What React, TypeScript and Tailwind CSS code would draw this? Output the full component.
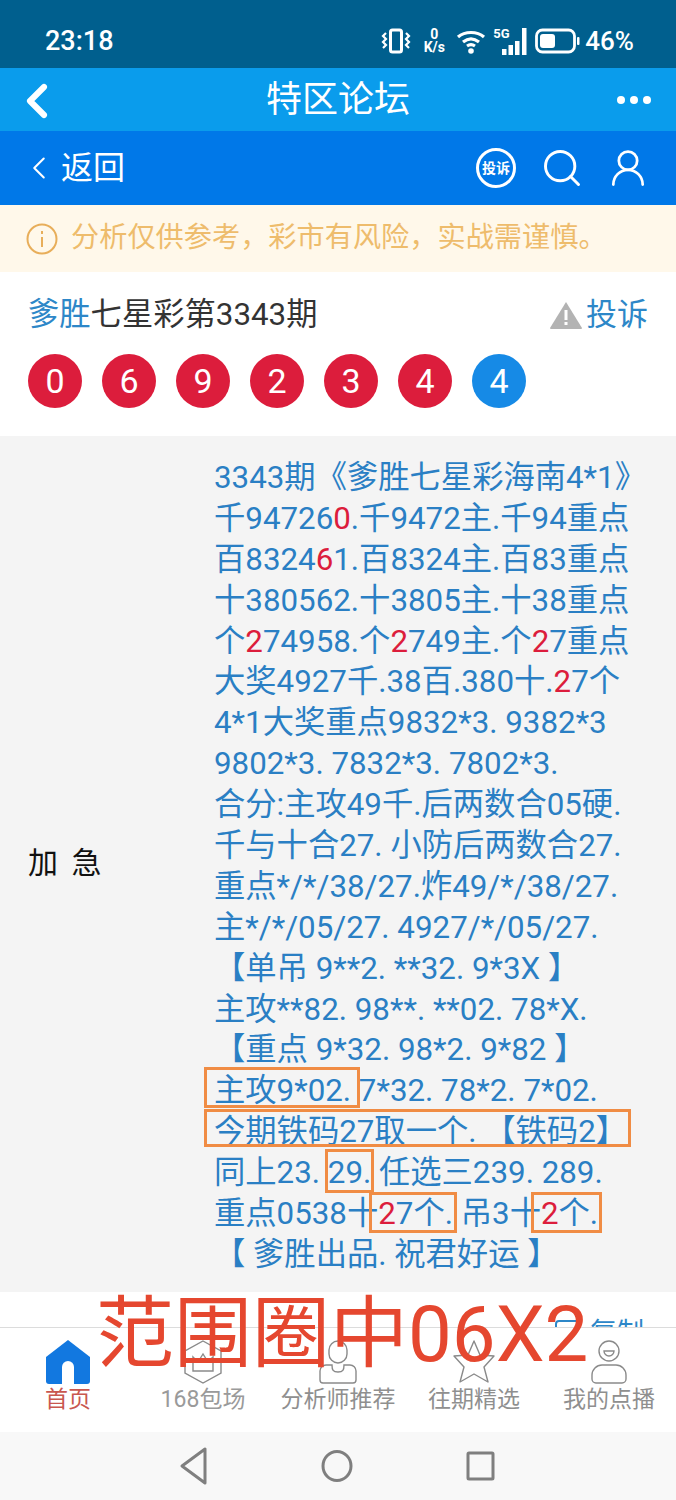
import React from 'react';
import { ChevronLeft, Search, UserRound } from 'lucide-react';

const font = "font-['Roboto','Noto_Sans_CJK_SC',sans-serif]";

type Part = string | { red: string };

const lines: Part[][] = [
  ['3343期《爹胜七星彩海南4*1》'],
  ['千94726', { red: '0' }, '.千9472主.千94重点'],
  ['百8324', { red: '6' }, '1.百8324主.百83重点'],
  ['十380562.十3805主.十38重点'],
  ['个', { red: '2' }, '74958.个', { red: '2' }, '749主.个', { red: '2' }, '7重点'],
  ['大奖4927千.38百.380十.', { red: '2' }, '7个'],
  ['4*1大奖重点9832*3. 9382*3'],
  ['9802*3. 7832*3. 7802*3.'],
  ['合分:主攻49千.后两数合05硬.'],
  ['千与十合27. 小防后两数合27.'],
  ['重点*/*/38/27.炸49/*/38/27.'],
  ['主*/*/05/27. 4927/*/05/27.'],
  ['【单吊 9**2. **32. 9*3X 】'],
  ['主攻**82. 98**. **02. 78*X.'],
  ['【重点 9*32. 98*2. 9*82 】'],
  ['主攻9*02. 7*32. 78*2. 7*02.'],
  ['今期铁码27取一个. 【铁码2】'],
  ['同上23. 29. 任选三239. 289.'],
  ['重点0538十', { red: '2' }, '7个. 吊3十', { red: '2' }, '个.'],
  ['【 爹胜出品. 祝君好运 】'],
];

const balls = ['0', '6', '9', '2', '3', '4'];

const StatusIcons = () => (
  <div className="flex items-center text-white">
    <svg width="30" height="28" viewBox="0 0 30 28" fill="none" stroke="currentColor" strokeWidth="3">
      <rect x="9.5" y="3" width="11" height="22" rx="2" />
      <path d="M5 6l-3 3 3 3-3 3 3 3-3 3M25 6l3 3-3 3 3 3-3 3 3 3" strokeWidth="2.2" />
    </svg>
    <div className="ml-[9px] w-[28px] text-center text-[14px] font-bold leading-[13px]">
      <div>0</div>
      <div>K/s</div>
    </div>
    <svg className="ml-[8px]" width="30" height="26" viewBox="0 0 30 26" fill="none" stroke="currentColor" strokeWidth="3.2">
      <path d="M2 9c7-6 19-6 26 0M7 14c5-4 11-4 16 0M11 18c3-2 5-2 8 0" />
      <circle cx="15" cy="23" r="2.8" fill="currentColor" stroke="none" />
    </svg>
    <div className="relative ml-[7px] h-[28px] w-[36px]">
      <span className="absolute left-0 top-0 text-[13px] font-bold leading-[14px]">5G</span>
      <svg className="absolute left-0 top-0" width="36" height="28" viewBox="0 0 36 28" fill="currentColor">
        <rect x="9" y="22" width="4.5" height="6" />
        <rect x="15.5" y="18" width="4.5" height="10" />
        <rect x="22" y="14" width="4.5" height="14" />
        <rect x="29" y="1" width="4.5" height="27" />
      </svg>
    </div>
    <svg className="ml-[6px]" width="46" height="26" viewBox="0 0 46 26" fill="none">
      <rect x="1.5" y="2" width="38" height="22" rx="6" stroke="currentColor" strokeWidth="2.8" />
      <rect x="5" y="6" width="15" height="14" rx="3" fill="currentColor" />
      <rect x="42" y="9" width="2.5" height="8" rx="1" fill="currentColor" />
    </svg>
    <span className="ml-[4px] text-[26px] font-medium leading-none">46%</span>
  </div>
);

const HomeIcon = () => (
  <svg width="44" height="44" viewBox="0 0 44 44" fill="#1278e0">
    <path d="M22 0L44 17V41a3 3 0 0 1-3 3H3a3 3 0 0 1-3-3V17Z" />
    <path d="M16 44V27a6 6 0 0 1 12 0V44Z" fill="#fff" />
  </svg>
);

const CrownIcon = () => (
  <svg width="40" height="44" viewBox="0 0 40 44" fill="none" stroke="#8a8a8a" strokeWidth="1.4">
    <path d="M20 1L38 11V33L20 43L2 33V11Z" />
    <path d="M10 17L15 22L20 14L25 22L30 17V31H10Z" />
  </svg>
);

const AdvisorIcon = () => (
  <svg width="40" height="44" viewBox="0 0 40 44" fill="none" stroke="#8a8a8a" strokeWidth="1.4">
    <rect x="11" y="1" width="18" height="22" rx="9" />
    <path d="M14 25H8a6 6 0 0 0-6 6V40a3 3 0 0 0 3 3H35a3 3 0 0 0 3-3V31a6 6 0 0 0-6-6H26c0 5-1 7-6 7s-6-2-6-7Z" />
  </svg>
);

const StarIcon = () => (
  <svg width="44" height="44" viewBox="0 0 44 44" fill="none" stroke="#8a8a8a" strokeWidth="1.4" strokeLinejoin="round">
    <path d="M22 1L28 15L42 16L32 27L36 42L22 34L8 42L12 27L2 16L16 15Z" />
  </svg>
);

const FaceIcon = () => (
  <svg width="38" height="44" viewBox="0 0 38 44" fill="none" stroke="#8a8a8a" strokeWidth="1.4">
    <circle cx="19" cy="11" r="10" />
    <path d="M14 11h10a5 5 0 0 1-10 0Z" />
    <path d="M12 25h14a10 10 0 0 1 10 10v4a4 4 0 0 1-4 4H6a4 4 0 0 1-4-4v-4a10 10 0 0 1 10-10Z" />
  </svg>
);

const tabs = [
  { label: '首页', icon: <HomeIcon />, color: 'text-[#c9574f]', width: 'w-[136px]' },
  { label: '168包场', icon: <CrownIcon />, color: 'text-[#9a9a9a]', width: 'w-[134px]' },
  { label: '分析师推荐', icon: <AdvisorIcon />, color: 'text-[#8f8f8f]', width: 'w-[136px]' },
  { label: '往期精选', icon: <StarIcon />, color: 'text-[#8f8f8f]', width: 'w-[136px]' },
  { label: '我的点播', icon: <FaceIcon />, color: 'text-[#8f8f8f]', width: 'w-[134px]' },
];

const App: React.FC = () => {
  return (
    <div className={`${font} relative h-[1500px] w-[676px] overflow-hidden bg-white`}>
      <div className="flex h-[68px] items-center justify-between bg-[#005f8e] pl-[45px] pr-[42px] pt-[14px]">
        <span className="text-[27px] font-medium leading-none text-white">23:18</span>
        <StatusIcons />
      </div>

      <div className="relative flex h-[63px] items-center justify-center bg-[#0a9cec]">
        <ChevronLeft className="absolute left-[9px] top-[5px] text-white" size={56} strokeWidth={2.6} />
        <span className="text-[36px] leading-none text-white">特区论坛</span>
        <div className="absolute right-[25px] top-[28px] flex gap-[5px]">
          <span className="h-[8px] w-[8px] rounded-full bg-white" />
          <span className="h-[8px] w-[8px] rounded-full bg-white" />
          <span className="h-[8px] w-[8px] rounded-full bg-white" />
        </div>
      </div>

      <div className="flex h-[74px] items-center justify-between bg-[#0078e8] pl-[20px] pr-[26px] text-white">
        <div className="flex items-center">
          <ChevronLeft size={38} strokeWidth={1.3} />
          <span className="ml-[3px] text-[32px] leading-none">返回</span>
        </div>
        <div className="flex items-center">
          <div className="flex h-[40px] w-[40px] items-center justify-center rounded-full border-[3px] border-white text-[14px] font-bold">
            投诉
          </div>
          <Search className="ml-[24px]" size={44} strokeWidth={1.6} />
          <UserRound className="ml-[22px]" size={44} strokeWidth={1.5} />
        </div>
      </div>

      <div className="flex h-[67px] items-center bg-[#fff8ea] pl-[26px]">
        <svg width="32" height="32" viewBox="0 0 32 32" fill="none" stroke="#e8ae5a" strokeWidth="2">
          <circle cx="16" cy="16" r="14.5" />
          <path d="M16 14v10M16 8v3" />
        </svg>
        <span className="ml-[13px] text-[28.2px] leading-none text-[#eebc6c]">分析仅供参考，彩市有风险，实战需谨慎。</span>
      </div>

      <div className="h-[164px] px-[28px] pt-[23px]">
        <div className="flex items-center justify-between">
          <div className="text-[31.3px] leading-[40px] text-[#333]">
            <span className="text-[#2d87c8]">爹胜</span>七星彩第3343期
          </div>
          <div className="flex items-center text-[#2d87c8]">
            <svg width="34" height="30" viewBox="0 0 34 30">
              <path d="M17 2L33 28a1 1 0 0 1-1 1H2a1 1 0 0 1-1-1Z" fill="#b3b3b3" />
              <rect x="15.5" y="10" width="3" height="10" fill="#fff" />
              <rect x="15.5" y="22" width="3" height="3" fill="#fff" />
            </svg>
            <span className="ml-[3px] text-[31px] leading-[40px]">投诉</span>
          </div>
        </div>
        <div className="mt-[19px] flex gap-[20px]">
          {balls.map((b, i) => (
            <div key={i} className="flex h-[54px] w-[54px] items-center justify-center rounded-full bg-[#dc1d3c] text-[34px] leading-none text-white">
              {b}
            </div>
          ))}
          <div className="flex h-[54px] w-[54px] items-center justify-center rounded-full bg-[#168ae6] text-[34px] leading-none text-white">
            4
          </div>
        </div>
      </div>

      <div className="flex h-[856px] bg-[#f4f4f4]">
        <div className="flex w-[214px] items-center pb-[2px] pl-[28px] text-[30px] leading-none [word-spacing:6px] text-[#111]">
          加 急
        </div>
        <div className="relative flex-1 pt-[22px] text-[31.3px] leading-[40.9px] whitespace-nowrap text-[#2a7fc4]">
          {lines.map((line, i) => (
            <div key={i} className="h-[40.9px]">
              {line.map((part, j) =>
                typeof part === 'string' ? (
                  <span key={j}>{part}</span>
                ) : (
                  <span key={j} className="text-[#dc1d3c]">{part.red}</span>
                ),
              )}
            </div>
          ))}
          <div className="absolute left-[-10px] top-[631px] h-[41px] w-[156px] border-[3px] border-[#f08c44]" />
          <div className="absolute left-[-10px] top-[673px] h-[38px] w-[427px] border-[3px] border-[#f08c44]" />
          <div className="absolute left-[111px] top-[713px] h-[44px] w-[49px] border-[3px] border-[#f08c44]" />
          <div className="absolute left-[155px] top-[756px] h-[41px] w-[88px] border-[3px] border-[#f08c44]" />
          <div className="absolute left-[317px] top-[756px] h-[41px] w-[71px] border-[3px] border-[#f08c44]" />
        </div>
      </div>

      <div className="flex h-[35px] items-start justify-end overflow-hidden bg-white pr-[32px] pt-[28px] text-[#2d87c8]">
        <svg className="mr-[9px]" width="26" height="26" viewBox="0 0 26 26" fill="none" stroke="currentColor" strokeWidth="2">
          <rect x="1" y="1" width="24" height="24" rx="3" />
        </svg>
        <span className="text-[27px] leading-none">复制</span>
      </div>

      <div className="flex h-[105px] border-t border-[#dcdcdc] bg-white pt-[12px]">
        {tabs.map((tab) => (
          <div key={tab.label} className={`flex ${tab.width} flex-col items-center`}>
            <div className="flex h-[44px] items-center">{tab.icon}</div>
            <span className={`mt-[2px] text-[23px] leading-[28px] whitespace-nowrap ${tab.color}`}>{tab.label}</span>
          </div>
        ))}
      </div>

      <div className="flex h-[68px] items-center justify-center gap-[112px] bg-[#f8f8f8] pr-[2px]">
        <svg width="30" height="40" viewBox="0 0 30 40" fill="none" stroke="#7f7f7f" strokeWidth="3" strokeLinejoin="round">
          <path d="M26 3V37L3 20Z" />
        </svg>
        <svg width="32" height="40" viewBox="0 0 32 40" fill="none" stroke="#7f7f7f" strokeWidth="3">
          <ellipse cx="16" cy="20" rx="14" ry="14.5" />
        </svg>
        <svg width="30" height="40" viewBox="0 0 30 40" fill="none" stroke="#7f7f7f" strokeWidth="3">
          <rect x="3" y="7" width="25" height="26" rx="1" />
        </svg>
      </div>

      <div className="absolute left-[96px] top-[1293px] text-[78px] leading-[84px] whitespace-nowrap text-[#e5472f]">
        范围圈中06X2
      </div>
    </div>
  );
};

export default App;
